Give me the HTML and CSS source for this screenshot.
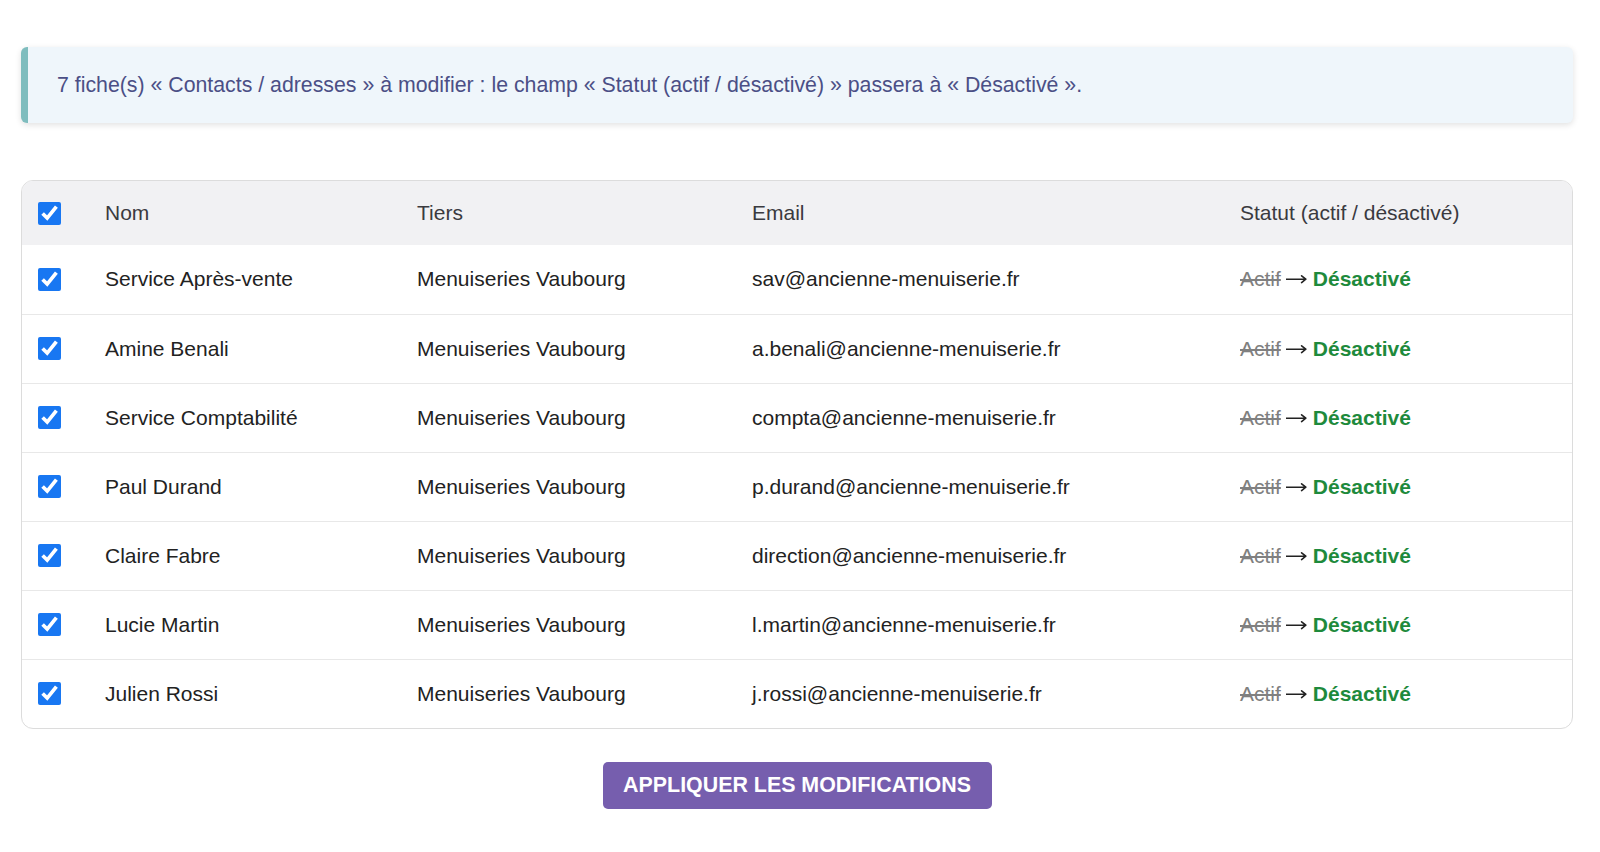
FILE: index.html
```html
<!DOCTYPE html>
<html lang="fr">
<head>
<meta charset="utf-8">
<title>Modification en masse</title>
<link rel="stylesheet" href="styles.css">
</head>
<body>
<main class="page">
  <div class="alert">7 fiche(s) « Contacts / adresses » à modifier : le champ « Statut (actif / désactivé) » passera à « Désactivé ».</div>

  <div class="table-wrap">
    <table class="grid">
      <colgroup>
        <col class="c-check"><col class="c-nom"><col class="c-tiers"><col class="c-email"><col class="c-statut">
      </colgroup>
      <thead>
        <tr>
          <th><input type="checkbox" class="cb" checked></th>
          <th>Nom</th>
          <th>Tiers</th>
          <th>Email</th>
          <th>Statut (actif / désactivé)</th>
        </tr>
      </thead>
      <tbody>
        <tr>
          <td><input type="checkbox" class="cb" checked></td>
          <td>Service Après-vente</td>
          <td>Menuiseries Vaubourg</td>
          <td>sav@ancienne-menuiserie.fr</td>
          <td><span class="old">Actif</span><svg class="arrow" viewBox="0 0 21 10" aria-label="→"><path d="M0 5.2H19.6M15.6 1.8L19.8 5.2L15.6 8.6"/></svg><span class="new">Désactivé</span></td>
        </tr>
        <tr>
          <td><input type="checkbox" class="cb" checked></td>
          <td>Amine Benali</td>
          <td>Menuiseries Vaubourg</td>
          <td>a.benali@ancienne-menuiserie.fr</td>
          <td><span class="old">Actif</span><svg class="arrow" viewBox="0 0 21 10" aria-label="→"><path d="M0 5.2H19.6M15.6 1.8L19.8 5.2L15.6 8.6"/></svg><span class="new">Désactivé</span></td>
        </tr>
        <tr>
          <td><input type="checkbox" class="cb" checked></td>
          <td>Service Comptabilité</td>
          <td>Menuiseries Vaubourg</td>
          <td>compta@ancienne-menuiserie.fr</td>
          <td><span class="old">Actif</span><svg class="arrow" viewBox="0 0 21 10" aria-label="→"><path d="M0 5.2H19.6M15.6 1.8L19.8 5.2L15.6 8.6"/></svg><span class="new">Désactivé</span></td>
        </tr>
        <tr>
          <td><input type="checkbox" class="cb" checked></td>
          <td>Paul Durand</td>
          <td>Menuiseries Vaubourg</td>
          <td>p.durand@ancienne-menuiserie.fr</td>
          <td><span class="old">Actif</span><svg class="arrow" viewBox="0 0 21 10" aria-label="→"><path d="M0 5.2H19.6M15.6 1.8L19.8 5.2L15.6 8.6"/></svg><span class="new">Désactivé</span></td>
        </tr>
        <tr>
          <td><input type="checkbox" class="cb" checked></td>
          <td>Claire Fabre</td>
          <td>Menuiseries Vaubourg</td>
          <td>direction@ancienne-menuiserie.fr</td>
          <td><span class="old">Actif</span><svg class="arrow" viewBox="0 0 21 10" aria-label="→"><path d="M0 5.2H19.6M15.6 1.8L19.8 5.2L15.6 8.6"/></svg><span class="new">Désactivé</span></td>
        </tr>
        <tr>
          <td><input type="checkbox" class="cb" checked></td>
          <td>Lucie Martin</td>
          <td>Menuiseries Vaubourg</td>
          <td>l.martin@ancienne-menuiserie.fr</td>
          <td><span class="old">Actif</span><svg class="arrow" viewBox="0 0 21 10" aria-label="→"><path d="M0 5.2H19.6M15.6 1.8L19.8 5.2L15.6 8.6"/></svg><span class="new">Désactivé</span></td>
        </tr>
        <tr>
          <td><input type="checkbox" class="cb" checked></td>
          <td>Julien Rossi</td>
          <td>Menuiseries Vaubourg</td>
          <td>j.rossi@ancienne-menuiserie.fr</td>
          <td><span class="old">Actif</span><svg class="arrow" viewBox="0 0 21 10" aria-label="→"><path d="M0 5.2H19.6M15.6 1.8L19.8 5.2L15.6 8.6"/></svg><span class="new">Désactivé</span></td>
        </tr>
      </tbody>
    </table>
  </div>

  <div class="actions">
    <button class="btn" type="button">APPLIQUER LES MODIFICATIONS</button>
  </div>
</main>
</body>
</html>
```

FILE: styles.css
```css
* { box-sizing: border-box; }

html, body {
  margin: 0;
  padding: 0;
  background: #ffffff;
}

body {
  font-family: "Liberation Sans", Arial, Helvetica, sans-serif;
  color: #222222;
  font-size: 21px;
}

.page {
  padding: 47px 27px 0 21px;
  display: flex;
  flex-direction: column;
}

.alert {
  height: 76px;
  display: flex;
  align-items: center;
  padding: 0 30px 0 29px;
  background: #eff6fb;
  border-left: 7px solid #7fbdbe;
  border-radius: 6px;
  color: #4b4f86;
  font-size: 21.3px;
  box-shadow: 0 2px 6px rgba(0, 0, 0, 0.12);
}

.table-wrap {
  margin-top: 57px;
  border: 1px solid #dcdcdc;
  border-radius: 12px;
  overflow: hidden;
}

.grid {
  width: 100%;
  border-collapse: collapse;
  table-layout: fixed;
}

.c-check { width: 67px; }
.c-nom { width: 312px; }
.c-tiers { width: 335px; }
.c-email { width: 488px; }
.c-statut { width: auto; }

.grid th,
.grid td {
  text-align: left;
  padding: 0 16px;
  vertical-align: middle;
  white-space: nowrap;
}

.grid th:first-child,
.grid td:first-child {
  padding-left: 16px;
  padding-right: 0;
}

.grid thead th {
  height: 64px;
  background: #f1f1f3;
  font-weight: normal;
  color: #3a3a3f;
}

.grid tbody td {
  height: 69px;
  border-top: 1px solid #e8e8e8;
  color: #222222;
}

.grid tbody tr:first-child td {
  border-top: none;
}

.cb {
  width: 23px;
  height: 23px;
  margin: 0;
  display: block;
  accent-color: #1877f2;
}

.old {
  color: #808080;
  text-decoration: line-through;
}

.arrow {
  width: 21px;
  height: 10px;
  margin: 0 6px 0 5px;
  vertical-align: 2px;
  fill: none;
  stroke: #222222;
  stroke-width: 1.6;
  stroke-linecap: round;
  stroke-linejoin: round;
}

.new {
  color: #1e8a3c;
  font-weight: bold;
}

.actions {
  display: flex;
  justify-content: center;
  margin-top: 33px;
}

.btn {
  width: 389px;
  height: 47px;
  border: none;
  border-radius: 5px;
  background: #765eae;
  color: #ffffff;
  font-family: "Liberation Sans", Arial, Helvetica, sans-serif;
  font-size: 21.4px;
  font-weight: bold;
  letter-spacing: 0;
  cursor: pointer;
}
```
